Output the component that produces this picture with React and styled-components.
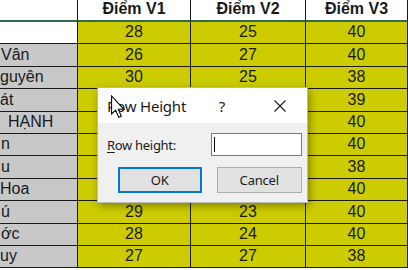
import React from 'react'
import styled, { createGlobalStyle } from 'styled-components'

const GlobalStyle = createGlobalStyle`
  html, body {
    margin: 0;
    padding: 0;
    background: #ffffff;
  }
  body {
    font-family: "Liberation Sans", Arial, sans-serif;
    overflow: hidden;
  }
`

// values in rows 4-8 of V1/V2 sit under the dialog, so they are left empty
const rows = [
  { name: '', pad: 0, v1: 28, v2: 25, v3: 40 },
  { name: 'Vân', pad: 1, v1: 26, v2: 27, v3: 40 },
  { name: 'guyên', pad: 0, v1: 30, v2: 25, v3: 38 },
  { name: 'át', pad: 0, v1: '', v2: '', v3: 39 },
  { name: 'HẠNH', pad: 8, v1: '', v2: '', v3: 40 },
  { name: 'n', pad: 1, v1: '', v2: '', v3: 40 },
  { name: 'u', pad: 1, v1: '', v2: '', v3: 38 },
  { name: 'Hoa', pad: 0, v1: '', v2: '', v3: 40 },
  { name: 'ú', pad: 1, v1: 29, v2: 23, v3: 40 },
  { name: 'ớc', pad: 1, v1: 28, v2: 24, v3: 40 },
  { name: 'uy', pad: 0, v1: 27, v2: 27, v3: 38 },
]

const Page = styled.div`
  position: relative;
  width: 408px;
  height: 270px;
  overflow: hidden;
`

const Sheet = styled.div`
  display: grid;
  grid-template-columns: 78px 113px 115px 102px;
  grid-template-rows: 22px;
  grid-auto-rows: 22.4px;
  color: #1a1a1a;
  font-size: 16px;
`

const HeadCell = styled.div`
  box-sizing: border-box;
  display: flex;
  align-items: flex-end;
  justify-content: center;
  padding-bottom: 3px;
  background: #ffffff;
  border-right: 1px solid #1a1a1a;
  border-bottom: 2px solid #33694f;
  font-weight: bold;
  line-height: 16px;
`

const Cell = styled.div`
  box-sizing: border-box;
  display: flex;
  align-items: flex-end;
  justify-content: ${(p) => (p.$name ? 'flex-start' : 'center')};
  padding-bottom: 3px;
  padding-left: ${(p) => p.$pad || 0}px;
  background: ${(p) => (p.$name ? (p.$blank ? '#ffffff' : '#c8c8c8') : '#cccc00')};
  border-right: 1px solid #1a1a1a;
  border-bottom: 1px solid #1a1a1a;
  line-height: 16px;
  white-space: nowrap;
  overflow: hidden;
`

const Dialog = styled.div`
  position: absolute;
  left: 97px;
  top: 87px;
  width: 211px;
  height: 116px;
  box-sizing: border-box;
  border: 1px solid #b9b9b9;
  background: #f0f0f0;
  box-shadow: 2px 3px 8px rgba(0, 0, 0, 0.35);
  font-family: "Noto Sans", "Open Sans", sans-serif;
  color: #1a1a1a;
  display: flex;
  flex-direction: column;
`

const TitleBar = styled.div`
  height: 35px;
  background: #ffffff;
  display: flex;
  align-items: center;
  padding-left: 9px;
`

const Title = styled.div`
  font-size: 15px;
  flex: 1;
  letter-spacing: -0.2px;
`

const Help = styled.div`
  font-size: 15px;
  width: 20px;
  margin-right: 42px;
  text-align: center;
`

const Close = styled.div`
  width: 12px;
  height: 12px;
  margin-right: 21px;
  display: flex;
`

const Body = styled.div`
  flex: 1;
  display: flex;
  flex-direction: column;
  padding: 10px 5px 0 9px;
  gap: 11px;
`

const FieldRow = styled.div`
  display: flex;
  align-items: center;
  justify-content: space-between;
`

const Label = styled.label`
  font-size: 13px;
  letter-spacing: -0.3px;
  u {
    text-decoration: underline;
    text-underline-offset: 2px;
  }
`

const Input = styled.div`
  box-sizing: border-box;
  width: 91px;
  height: 23px;
  background: #ffffff;
  border: 1px solid #7a7a7a;
  display: flex;
  align-items: center;
  padding-left: 2px;

  &::before {
    content: '';
    width: 1px;
    height: 15px;
    background: #000000;
  }
`

const ButtonRow = styled.div`
  display: flex;
  gap: 15px;
  padding-left: 11px;
`

const Button = styled.button`
  box-sizing: border-box;
  width: ${(p) => p.$w}px;
  height: 26px;
  background: #e1e1e1;
  border: ${(p) => (p.$primary ? '2px solid #0078d7' : '1px solid #adadad')};
  font-family: "Noto Sans", "Open Sans", sans-serif;
  font-size: 13px;
  color: #1a1a1a;
  padding: 0;
  letter-spacing: -0.2px;
`

const Cursor = styled.svg`
  position: absolute;
  left: 111px;
  top: 95px;
`

const App = () => {
  return (
    <Page>
      <GlobalStyle />
      <Sheet>
        <HeadCell />
        <HeadCell>Điểm V1</HeadCell>
        <HeadCell>Điểm V2</HeadCell>
        <HeadCell>Điểm V3</HeadCell>
        {rows.map((r, i) => (
          <React.Fragment key={i}>
            <Cell $name $blank={i === 0} $pad={r.pad}>{r.name}</Cell>
            <Cell>{r.v1}</Cell>
            <Cell>{r.v2}</Cell>
            <Cell>{r.v3}</Cell>
          </React.Fragment>
        ))}
      </Sheet>

      <Dialog>
        <TitleBar>
          <Title>Row Height</Title>
          <Help>?</Help>
          <Close>
            <svg width="12" height="12" viewBox="0 0 12 12">
              <path d="M0.5 0.5 L11.5 11.5 M11.5 0.5 L0.5 11.5" stroke="#1a1a1a" strokeWidth="1.1" fill="none" />
            </svg>
          </Close>
        </TitleBar>
        <Body>
          <FieldRow>
            <Label><u>R</u>ow height:</Label>
            <Input />
          </FieldRow>
          <ButtonRow>
            <Button $primary $w={84}>OK</Button>
            <Button $w={86}>Cancel</Button>
          </ButtonRow>
        </Body>
      </Dialog>

      <Cursor width="14" height="24" viewBox="0 0 12 20">
        <path
          d="M0.5 0.5 L0.5 16 L4 12.7 L6.6 18.8 L8.8 17.9 L6.3 12 L11 12 Z"
          fill="#ffffff"
          stroke="#000000"
          strokeWidth="0.9"
          strokeLinejoin="miter"
        />
      </Cursor>
    </Page>
  )
}

export default App
